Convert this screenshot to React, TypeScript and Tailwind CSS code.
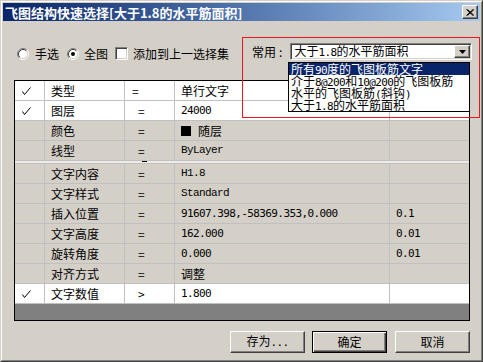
import React from 'react';

type Row = {
  chk?: boolean;
  name: string;
  eq: string;
  eqHeader?: boolean;
  val: React.ReactNode;
  extra?: string;
  white?: boolean;
};

function Check() {
  return (
    <svg width="9" height="8" viewBox="0 0 9 8" className="block">
      <path d="M0.5 4.5 L2.5 7.5 L8.5 0.5" fill="none" stroke="#000" strokeWidth="1" />
    </svg>
  );
}

function Radio({ on }: { on?: boolean }) {
  return (
    <svg width="12" height="12" viewBox="0 0 12 12" className="block shrink-0">
      <circle cx="6" cy="6" r="4.5" fill="#fff" />
      <path d="M2.11 9.89 A5.5 5.5 0 0 1 9.89 2.11" fill="none" stroke="#808080" strokeWidth="1" />
      <path d="M9.89 2.11 A5.5 5.5 0 0 1 2.11 9.89" fill="none" stroke="#ffffff" strokeWidth="1" />
      <path d="M2.82 9.18 A4.5 4.5 0 0 1 9.18 2.82" fill="none" stroke="#404040" strokeWidth="1" />
      <path d="M9.18 2.82 A4.5 4.5 0 0 1 2.82 9.18" fill="none" stroke="#d4d0c8" strokeWidth="1" />
      {on && <circle cx="6" cy="6" r="2" fill="#000" />}
    </svg>
  );
}

const num = "font-['DejaVu_Sans_Mono',monospace] text-[11px] tracking-[-0.6px]";
const mono = "font-['Liberation_Mono',monospace] text-[11px] tracking-[-0.6px]";

function H({ children }: { children: React.ReactNode }) {
  return (
    <span className="font-['DejaVu_Sans_Mono',monospace] text-[11px] leading-[12px] tracking-[-0.6px]">
      {children}
    </span>
  );
}

const rowsTop: Row[] = [
  { chk: true, name: '类型', eq: '=', eqHeader: true, val: '单行文字', white: true },
  { chk: true, name: '图层', eq: '=', val: <span className={num}>24000</span>, white: true },
  {
    name: '颜色',
    eq: '=',
    val: (
      <span className="flex items-center">
        <span className="inline-block w-[10px] h-[10px] bg-black mr-[7px]" />
        随层
      </span>
    ),
  },
  { name: '线型', eq: '=', val: <span className={mono}>ByLayer</span> },
];

const rowsBottom: Row[] = [
  { name: '文字内容', eq: '=', val: <span className={mono}>H1.8</span> },
  { name: '文字样式', eq: '=', val: <span className={mono}>Standard</span> },
  { name: '插入位置', eq: '=', val: <span className={num}>91607.398,-58369.353,0.000</span>, extra: '0.1' },
  { name: '文字高度', eq: '=', val: <span className={num}>162.000</span>, extra: '0.01' },
  { name: '旋转角度', eq: '=', val: <span className={num}>0.000</span>, extra: '0.01' },
  { name: '对齐方式', eq: '=', val: '调整' },
  { chk: true, name: '文字数值', eq: '>', val: <span className={num}>1.800</span>, white: true },
];

function TableRow({ r }: { r: Row }) {
  return (
    <div
      className={`grid grid-cols-[30px_80px_50px_215px_79px] h-[20px] border-b border-[#c0c0c0] text-[12px] leading-none ${
        r.white ? 'bg-white' : 'bg-[#d4d0c8]'
      }`}
    >
      <div className="border-r border-[#c0c0c0] flex items-center pl-[7px]">{r.chk && <Check />}</div>
      <div className="border-r border-[#c0c0c0] flex items-center pl-[6px]">{r.name}</div>
      <div
        className={`border-r border-[#c0c0c0] flex items-center ${r.eqHeader ? 'pl-[7px]' : 'pl-[13px]'}`}
      >
        {r.eq}
      </div>
      <div className="border-r border-[#c0c0c0] flex items-center pl-[6px] whitespace-nowrap">{r.val}</div>
      <div className={`flex items-center pl-[6px] ${num}`}>{r.extra}</div>
    </div>
  );
}

function Button({ label, def }: { label: React.ReactNode; def?: boolean }) {
  return def ? (
    <div className="w-[75px] h-[22px] border border-black bg-[#d4d0c8] shadow-[inset_1px_1px_#ffffff,inset_-1px_-1px_#404040,inset_-2px_-2px_#808080] flex items-center justify-center text-[12px] leading-none">
      {label}
    </div>
  ) : (
    <div className="w-[75px] h-[22px] border border-t-white border-l-white border-r-[#404040] border-b-[#404040] bg-[#d4d0c8] shadow-[inset_-1px_-1px_#808080] flex items-center justify-center text-[12px] leading-none">
      {label}
    </div>
  );
}

export default function App() {
  return (
    <div className="relative w-[483px] h-[362px] font-['Noto_Sans_CJK_SC','Liberation_Sans',sans-serif] text-black select-none">
      <div className="w-full h-full bg-[#d4d0c8] border border-t-[#d4d0c8] border-l-[#d4d0c8] border-r-[#404040] border-b-[#404040]">
        <div className="w-full h-full border border-t-white border-l-white border-r-[#808080] border-b-[#808080] p-px flex flex-col">
          {/* Title bar */}
          <div className="h-[18px] bg-gradient-to-r from-[#0a246a] to-[#a6caf0] flex items-center pl-[2px] pr-[2px]">
            <span className="text-white font-bold text-[13px] leading-none whitespace-nowrap">
              飞图结构快速选择[大于1.8的水平筋面积]
            </span>
            <div className="ml-auto w-[16px] h-[14px] bg-[#d4d0c8] border border-t-white border-l-white border-r-[#404040] border-b-[#404040] shadow-[inset_-1px_-1px_#808080] flex items-center justify-center">
              <svg width="8" height="7" viewBox="0 0 8 7" className="block">
                <path d="M0.5 0.5 L7 6.5 M1.5 0.5 L8 6.5 M7 0.5 L0.5 6.5 M8 0.5 L1.5 6.5" stroke="#000" strokeWidth="1" fill="none" />
              </svg>
            </div>
          </div>

          {/* Options row */}
          <div className="mt-[22px] h-[17px] flex items-start text-[12px] leading-none">
            <div className="flex items-center h-[17px] mt-[2px] ml-[14px]">
              <Radio />
              <span className="ml-[6px]">手选</span>
              <span className="ml-[8px]">
                <Radio on />
              </span>
              <span className="ml-[5px]">全图</span>
              <span className="ml-[7px] w-[13px] h-[13px] bg-white border border-t-[#808080] border-l-[#808080] border-r-white border-b-white shadow-[inset_1px_1px_#404040,inset_-1px_-1px_#d4d0c8]" />
              <span className="ml-[5px]">添加到上一选择集</span>
            </div>
            <div className="flex items-center h-[17px] ml-[23px]">
              <span>常用</span>
              <span className="ml-[3px]">:</span>
            </div>
            <div className="ml-[8px] w-[182px] h-[17px] bg-white border border-t-[#808080] border-l-[#808080] border-r-white border-b-white shadow-[inset_1px_1px_#404040,inset_-1px_-1px_#d4d0c8] flex items-center p-[1px]">
              <span className="pl-[2px] whitespace-nowrap">
                大于<H>1.8</H>的水平筋面积
              </span>
              <div className="ml-auto w-[16px] h-[13px] bg-[#d4d0c8] border border-t-white border-l-white border-r-[#404040] border-b-[#404040] shadow-[inset_-1px_-1px_#808080] flex items-center justify-center">
                <svg width="7" height="4" viewBox="0 0 7 4" className="block">
                  <path d="M0 0 H7 L3.5 4 Z" fill="#000" />
                </svg>
              </div>
            </div>
          </div>

          {/* Table */}
          <div className="mt-[20px] ml-[11px] w-[456px] h-[241px] border border-black flex flex-col">
            {rowsTop.map((r, i) => (
              <TableRow key={'t' + i} r={r} />
            ))}
            <div className="grid grid-cols-[30px_80px_50px_215px_79px] h-[3px] bg-[#ecebe8] border-b border-[#c0c0c0]">
              <div />
              <div />
              <div>
                <div className="ml-[17px] w-[5px] h-px bg-black" />
              </div>
              <div />
              <div />
            </div>
            {rowsBottom.map((r, i) => (
              <TableRow key={'b' + i} r={r} />
            ))}
            <div className="flex-1 bg-[#808080]" />
          </div>

          {/* Buttons */}
          <div className="mt-[10px] flex justify-end pr-[10px] gap-[7px]">
            <Button
              label={
                <span>
                  存为<H>...</H>
                </span>
              }
            />
            <Button label="确定" def />
            <div className="ml-[1px]">
              <Button label="取消" />
            </div>
          </div>
        </div>
      </div>

      {/* Dropdown list overlay */}
      <div className="absolute left-[288px] top-[62px] w-[182px] h-[50px] bg-white border border-black text-[12px] leading-[12px]">
        <div className="h-[12px] bg-[#0a246a] text-white pl-[2px] whitespace-nowrap">
          所有<H>90</H>度的飞图板筋文字
        </div>
        <div className="h-[12px] pl-[2px] whitespace-nowrap">
          介于<H>8@200</H>和<H>10@200</H>的飞图板筋
        </div>
        <div className="h-[12px] pl-[2px] whitespace-nowrap">
          水平的飞图板筋<H>(</H>斜钩<H>)</H>
        </div>
        <div className="h-[12px] pl-[2px] whitespace-nowrap">
          大于<H>1.8</H>的水平筋面积
        </div>
      </div>

      {/* Red annotation box */}
      <div className="absolute left-[242px] top-[37px] w-[238px] h-[81px] border border-[#f0141e] pointer-events-none" />
    </div>
  );
}
